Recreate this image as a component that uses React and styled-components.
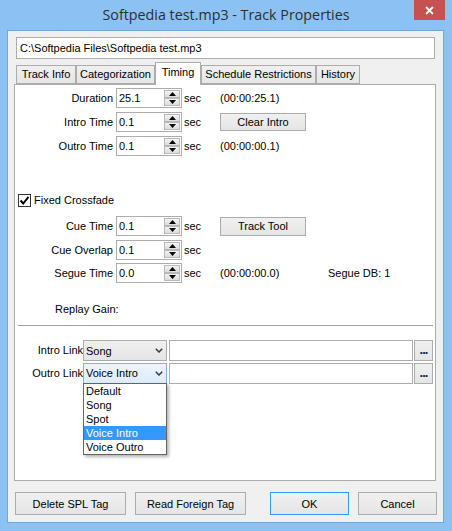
import React from 'react'
import styled, { createGlobalStyle } from 'styled-components'

const colors = {
  frame: '#8CC2F3',
  frameEdge: '#6FA6DC',
  face: '#F0F0F0',
  border: '#ACACAC',
  field: '#ABADB3',
  highlight: '#3399FF',
  close: '#C75050',
}

const GlobalStyle = createGlobalStyle`
  html, body { margin: 0; padding: 0; }
  body {
    font-family: "Liberation Sans", Arial, sans-serif;
    font-size: 11px;
    color: #000;
  }
  * { box-sizing: border-box; }
`

const Window = styled.div`
  width: 452px;
  height: 531px;
  background: ${colors.frame};
  display: flex;
  flex-direction: column;
`

const TitleBar = styled.div`
  height: 30px;
  display: grid;
  grid-template-columns: 1fr auto 1fr;
`

const Title = styled.div`
  grid-column: 2;
  font-family: "Open Sans", "Noto Sans", sans-serif;
  font-size: 14.3px;
  line-height: 30px;
  color: #2e2e2e;
`

const CloseButton = styled.div`
  grid-column: 3;
  justify-self: end;
  width: 31px;
  height: 20px;
  margin-right: 7px;
  background: ${colors.close};
  display: flex;
  align-items: center;
  justify-content: center;
`

const Client = styled.div`
  flex: 1;
  margin: 0 8px 8px 7px;
  border: 1px solid ${colors.frameEdge};
  background: ${colors.face};
  padding: 6px 7px 7px 6px;
  display: flex;
  flex-direction: column;
`

const PathField = styled.div`
  height: 22px;
  margin: 0 1px 0 2px;
  border: 1px solid ${colors.field};
  background: #fff;
  padding: 0 3px;
  line-height: 20px;
`

const TabStrip = styled.div`
  margin-top: 3px;
  padding-left: 2px;
  height: 22px;
  display: flex;
  align-items: flex-end;
  position: relative;
  z-index: 1;
`

const Tab = styled.div`
  width: ${p => p.$w}px;
  height: ${p => (p.$active ? 23 : 19)}px;
  margin-bottom: ${p => (p.$active ? -1 : 0)}px;
  border: 1px solid ${colors.border};
  border-bottom: ${p => (p.$active ? 'none' : `1px solid ${colors.border}`)};
  background: ${p => (p.$active ? '#fff' : 'linear-gradient(#F0F0F0, #E5E5E5)')};
  text-align: center;
  line-height: ${p => (p.$active ? 18 : 17)}px;
  white-space: nowrap;
`

const Panel = styled.div`
  flex: 1;
  border: 1px solid ${colors.border};
  background: #fff;
  padding-top: 3px;
  display: flex;
  flex-direction: column;
`

const Group = styled.div`
  display: flex;
  flex-direction: column;
  gap: ${p => p.$gap}px;
  margin-top: ${p => p.$top || 0}px;
`

const FieldRow = styled.div`
  display: grid;
  grid-template-columns: 101px 68px 36px 108px auto;
  height: 20px;
  align-items: center;
`

const Label = styled.div`
  text-align: right;
  padding-right: 3px;
  white-space: nowrap;
`

const SpinField = styled.div`
  width: 66px;
  height: 20px;
  border: 1px solid ${colors.field};
  background: #fff;
  display: flex;
  align-items: center;
`

const Value = styled.div`
  flex: 1;
  padding-left: 2px;
`

const Spinner = styled.div`
  display: flex;
  flex-direction: column;
  margin: 1px 1px 1px 0;
`

const SpinButton = styled.div`
  width: 16px;
  height: 8px;
  border: 1px solid #B9B9B9;
  background: linear-gradient(#F4F4F4, #DCDCDC);
  display: flex;
  align-items: center;
  justify-content: center;
`

const Unit = styled.div`
  padding-left: 0;
`

const PushButton = styled.div`
  width: ${p => p.$w}px;
  height: ${p => p.$h || 23}px;
  border: 1px solid ${p => (p.$default ? colors.highlight : colors.border)};
  background: linear-gradient(#F0F0F0, #E5E5E5);
  display: flex;
  align-items: center;
  justify-content: center;
  white-space: nowrap;
`

const CheckRow = styled.div`
  height: 16px;
  margin-top: 36px;
  padding-left: 3px;
  display: flex;
  align-items: center;
  gap: 3px;
`

const CheckBox = styled.div`
  width: 13px;
  height: 13px;
  border: 1px solid #333;
  background: #fff;
  display: flex;
  align-items: center;
  justify-content: center;
`

const TextRow = styled.div`
  height: 16px;
  line-height: 16px;
  margin-top: ${p => p.$top}px;
  padding-left: ${p => p.$indent}px;
`

const Separator = styled.div`
  height: 2px;
  margin: 8px 2px 0 3px;
  border-top: 1px solid #A0A0A0;
  border-bottom: 1px solid #fff;
`

const LinkRow = styled.div`
  display: flex;
  height: 21px;
  align-items: stretch;
`

const LinkLabel = styled.div`
  width: 68px;
  text-align: right;
  line-height: 21px;
  white-space: nowrap;
`

const ComboBox = styled.div`
  position: relative;
  width: 84px;
  border: 1px solid ${p => (p.$focused ? '#7EB4EA' : colors.border)};
  background: ${p => (p.$focused ? 'linear-gradient(#ECF4FC, #DCECFC)' : 'linear-gradient(#F0F0F0, #E5E5E5)')};
  display: flex;
  align-items: center;
  padding: 0 3px 0 2px;
`

const ComboText = styled.div`
  flex: 1;
`

const DropList = styled.div`
  position: absolute;
  top: 100%;
  left: -1px;
  width: 84px;
  background: #fff;
  border: 1px solid #646464;
  box-shadow: 2px 2px 3px rgba(0, 0, 0, 0.3);
  z-index: 5;
`

const DropItem = styled.div`
  height: 14px;
  line-height: 14px;
  padding-left: 2px;
  background: ${p => (p.$selected ? colors.highlight : 'transparent')};
  color: ${p => (p.$selected ? '#fff' : '#000')};
`

const TextBox = styled.div`
  width: 244px;
  margin-left: 2px;
  border: 1px solid ${colors.field};
  background: #fff;
`

const DotsButton = styled.div`
  width: 19px;
  margin-left: 1px;
  border: 1px solid ${colors.border};
  background: linear-gradient(#F0F0F0, #E5E5E5);
  font-weight: bold;
  font-size: 13px;
  text-align: center;
  line-height: 18px;
  letter-spacing: -1px;
  color: #1a1a40;
`

const ButtonBar = styled.div`
  margin: 11px -1px 0 1px;
  display: flex;
  justify-content: space-between;
`

const ButtonGroup = styled.div`
  display: flex;
  gap: 9px;
`

const Triangle = ({ up }) => (
  <svg width="7" height="4" viewBox="0 0 7 4">
    <polygon points={up ? '0,4 3.5,0 7,4' : '0,0 7,0 3.5,4'} fill="#000" />
  </svg>
)

const Chevron = () => (
  <svg width="8" height="5" viewBox="0 0 8 5">
    <polyline points="0.8,0.8 4,4 7.2,0.8" fill="none" stroke="#3a3a3a" strokeWidth="1.5" />
  </svg>
)

const Spin = ({ value }) => (
  <SpinField>
    <Value>{value}</Value>
    <Spinner>
      <SpinButton><Triangle up /></SpinButton>
      <SpinButton><Triangle /></SpinButton>
    </Spinner>
  </SpinField>
)

const tabs = [
  { name: 'Track Info', w: 60 },
  { name: 'Categorization', w: 79 },
  { name: 'Timing', w: 46, active: true },
  { name: 'Schedule Restrictions', w: 115 },
  { name: 'History', w: 44 },
]

const linkTypes = ['Default', 'Song', 'Spot', 'Voice Intro', 'Voice Outro']

export default function App() {
  return (
    <>
      <GlobalStyle />
      <Window>
        <TitleBar>
          <Title>Softpedia test.mp3 - Track Properties</Title>
          <CloseButton>
            <svg width="9" height="9" viewBox="0 0 9 9">
              <path d="M1 1 L8 8 M8 1 L1 8" stroke="#fff" strokeWidth="1.8" />
            </svg>
          </CloseButton>
        </TitleBar>
        <Client>
          <PathField>C:\Softpedia Files\Softpedia test.mp3</PathField>
          <TabStrip>
            {tabs.map(t => (
              <Tab key={t.name} $w={t.w} $active={t.active}>{t.name}</Tab>
            ))}
          </TabStrip>
          <Panel>
            <Group $gap={4}>
              <FieldRow>
                <Label>Duration</Label>
                <Spin value="25.1" />
                <Unit>sec</Unit>
                <div>(00:00:25.1)</div>
              </FieldRow>
              <FieldRow>
                <Label>Intro Time</Label>
                <Spin value="0.1" />
                <Unit>sec</Unit>
                <PushButton $w={86} $h={18}>Clear Intro</PushButton>
              </FieldRow>
              <FieldRow>
                <Label>Outro Time</Label>
                <Spin value="0.1" />
                <Unit>sec</Unit>
                <div>(00:00:00.1)</div>
              </FieldRow>
            </Group>

            <CheckRow>
              <CheckBox>
                <svg width="11" height="11" viewBox="0 0 11 11">
                  <path d="M1.5 5.5 L4.2 8.5 L9.5 1.8" fill="none" stroke="#000" strokeWidth="1.9" />
                </svg>
              </CheckBox>
              <span>Fixed Crossfade</span>
            </CheckRow>

            <Group $gap={3.5} $top={8}>
              <FieldRow>
                <Label>Cue Time</Label>
                <Spin value="0.1" />
                <Unit>sec</Unit>
                <PushButton $w={86} $h={19}>Track Tool</PushButton>
              </FieldRow>
              <FieldRow>
                <Label>Cue Overlap</Label>
                <Spin value="0.1" />
                <Unit>sec</Unit>
              </FieldRow>
              <FieldRow>
                <Label>Segue Time</Label>
                <Spin value="0.0" />
                <Unit>sec</Unit>
                <div>(00:00:00.0)</div>
                <div>Segue DB: 1</div>
              </FieldRow>
            </Group>

            <TextRow $top={18} $indent={40}>Replay Gain:</TextRow>

            <Separator />

            <Group $gap={1.5} $top={13}>
              <LinkRow>
                <LinkLabel>Intro Link</LinkLabel>
                <ComboBox>
                  <ComboText>Song</ComboText>
                  <Chevron />
                </ComboBox>
                <TextBox />
                <DotsButton>...</DotsButton>
              </LinkRow>
              <LinkRow>
                <LinkLabel>Outro Link</LinkLabel>
                <ComboBox $focused>
                  <ComboText>Voice Intro</ComboText>
                  <Chevron />
                  <DropList>
                    {linkTypes.map(t => (
                      <DropItem key={t} $selected={t === 'Voice Intro'}>{t}</DropItem>
                    ))}
                  </DropList>
                </ComboBox>
                <TextBox />
                <DotsButton>...</DotsButton>
              </LinkRow>
            </Group>
          </Panel>
          <ButtonBar>
            <ButtonGroup>
              <PushButton $w={111}>Delete SPL Tag</PushButton>
              <PushButton $w={111}>Read Foreign Tag</PushButton>
            </ButtonGroup>
            <ButtonGroup>
              <PushButton $w={79} $default>OK</PushButton>
              <PushButton $w={79}>Cancel</PushButton>
            </ButtonGroup>
          </ButtonBar>
        </Client>
      </Window>
    </>
  )
}
